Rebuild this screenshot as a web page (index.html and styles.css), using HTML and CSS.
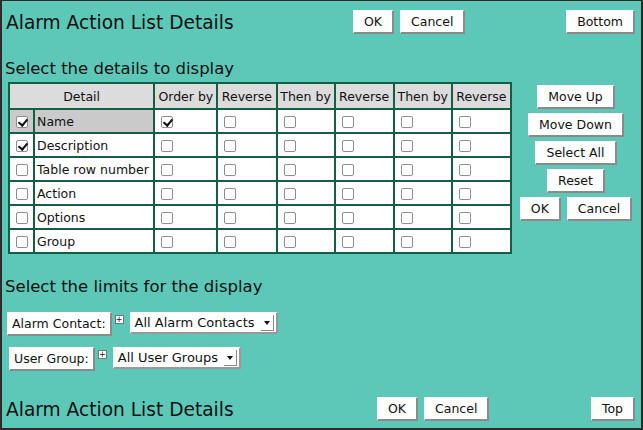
FILE: index.html
```html
<!DOCTYPE html>
<html lang="en">
<head>
    <meta charset="UTF-8">
    <title>Alarm Action List Details</title>
    <link rel="stylesheet" href="styles.css">
</head>
<body>
    <div class="frame">
        <div class="topbar">
            <h1 class="titulo">Alarm Action List Details</h1>
            <div class="acoes">
                <button class="btn">OK</button>
                <button class="btn">Cancel</button>
            </div>
            <button class="btn salto">Bottom</button>
        </div>

        <h2 class="secao">Select the details to display</h2>
        <div class="detalhes">
            <table class="grade">
                <colgroup>
                    <col class="c-marca">
                    <col class="c-nome">
                    <col class="c-ordem">
                    <col class="c-rev">
                    <col class="c-then">
                    <col class="c-rev">
                    <col class="c-then">
                    <col class="c-rev">
                </colgroup>
                <thead>
                    <tr>
                        <th colspan="2">Detail</th>
                        <th>Order by</th>
                        <th>Reverse</th>
                        <th>Then by</th>
                        <th>Reverse</th>
                        <th>Then by</th>
                        <th>Reverse</th>
                    </tr>
                </thead>
                <tbody>
                    <tr class="selecionada">
                        <td class="marca"><input type="checkbox" checked></td>
                        <td class="nome">Name</td>
                        <td><input type="checkbox" checked></td>
                        <td><input type="checkbox"></td>
                        <td><input type="checkbox"></td>
                        <td><input type="checkbox"></td>
                        <td><input type="checkbox"></td>
                        <td><input type="checkbox"></td>
                    </tr>
                    <tr>
                        <td class="marca"><input type="checkbox" checked></td>
                        <td class="nome">Description</td>
                        <td><input type="checkbox"></td>
                        <td><input type="checkbox"></td>
                        <td><input type="checkbox"></td>
                        <td><input type="checkbox"></td>
                        <td><input type="checkbox"></td>
                        <td><input type="checkbox"></td>
                    </tr>
                    <tr>
                        <td class="marca"><input type="checkbox"></td>
                        <td class="nome">Table row number</td>
                        <td><input type="checkbox"></td>
                        <td><input type="checkbox"></td>
                        <td><input type="checkbox"></td>
                        <td><input type="checkbox"></td>
                        <td><input type="checkbox"></td>
                        <td><input type="checkbox"></td>
                    </tr>
                    <tr>
                        <td class="marca"><input type="checkbox"></td>
                        <td class="nome">Action</td>
                        <td><input type="checkbox"></td>
                        <td><input type="checkbox"></td>
                        <td><input type="checkbox"></td>
                        <td><input type="checkbox"></td>
                        <td><input type="checkbox"></td>
                        <td><input type="checkbox"></td>
                    </tr>
                    <tr>
                        <td class="marca"><input type="checkbox"></td>
                        <td class="nome">Options</td>
                        <td><input type="checkbox"></td>
                        <td><input type="checkbox"></td>
                        <td><input type="checkbox"></td>
                        <td><input type="checkbox"></td>
                        <td><input type="checkbox"></td>
                        <td><input type="checkbox"></td>
                    </tr>
                    <tr>
                        <td class="marca"><input type="checkbox"></td>
                        <td class="nome">Group</td>
                        <td><input type="checkbox"></td>
                        <td><input type="checkbox"></td>
                        <td><input type="checkbox"></td>
                        <td><input type="checkbox"></td>
                        <td><input type="checkbox"></td>
                        <td><input type="checkbox"></td>
                    </tr>
                </tbody>
            </table>

            <div class="lateral">
                <button class="btn">Move Up</button>
                <button class="btn">Move Down</button>
                <button class="btn">Select All</button>
                <button class="btn">Reset</button>
                <div class="par">
                    <button class="btn">OK</button>
                    <button class="btn">Cancel</button>
                </div>
            </div>
        </div>

        <h2 class="secao limites">Select the limits for the display</h2>
        <div class="filtro f1">
            <button class="btn rotulo">Alarm Contact:</button>
            <span class="mais">+</span>
            <span class="lista">All Alarm Contacts <span class="seta"></span></span>
        </div>
        <div class="filtro f2">
            <button class="btn rotulo">User Group:</button>
            <span class="mais">+</span>
            <span class="lista">All User Groups <span class="seta"></span></span>
        </div>

        <div class="topbar rodape">
            <h1 class="titulo">Alarm Action List Details</h1>
            <div class="acoes">
                <button class="btn">OK</button>
                <button class="btn">Cancel</button>
            </div>
            <button class="btn salto">Top</button>
        </div>
    </div>
</body>
</html>
```

FILE: styles.css
```css
body {
    margin: 0;
    font-family: "DejaVu Sans", Verdana, sans-serif;
    color: #111;
}
.frame {
    width: 643px;
    height: 430px;
    box-sizing: border-box;
    background-color: #5dc8b7;
    border: 1px solid #2b2b2b;
    border-left-width: 2px;
    border-right-width: 2px;
    border-bottom-width: 2px;
    position: relative;
}
.topbar {
    display: flex;
    align-items: center;
    height: 24px;
    margin-top: 9px;
    padding: 0 6px 0 4px;
}
.titulo {
    font-size: 18.6px;
    font-weight: normal;
    margin: 0;
    width: 347px;
}
.acoes {
    display: flex;
    gap: 6px;
}
.salto {
    margin-left: auto;
}
.btn {
    font-family: "DejaVu Sans", Verdana, sans-serif;
    font-size: 12.5px;
    color: #111;
    background-color: #fff;
    height: 24px;
    padding: 0 10px;
    border: 1px solid #fff;
    border-right: 2px solid #8a8a8a;
    border-bottom: 2px solid #8a8a8a;
    border-radius: 0;
}
.secao {
    font-size: 16.5px;
    font-weight: normal;
    margin: 25px 0 0 3px;
    line-height: 20px;
}
.detalhes {
    display: flex;
    margin: 3px 0 0 6px;
}
.grade {
    background-color: #135f42;
    border-spacing: 2px;
    font-size: 12.5px;
    table-layout: fixed;
    width: 504px;
}
.c-marca { width: 23px; }
.c-nome { width: 118px; }
.c-ordem { width: 61px; }
.c-rev { width: 57px; }
.c-then { width: 56px; }
.grade th {
    background-color: #dcdcdc;
    font-weight: normal;
    height: 24px;
    padding: 0;
    white-space: nowrap;
}
.grade td {
    background-color: #fff;
    height: 22px;
    padding: 0 0 0 6px;
    text-align: left;
}
.grade td.nome {
    padding: 0 2px;
    white-space: nowrap;
}
.grade tr.selecionada td.marca, .grade tr.selecionada td.nome {
    background-color: #cacaca;
}
.grade input {
    appearance: none;
    margin: 0;
    width: 12px;
    height: 12px;
    border: 1px solid #8e8e8e;
    border-radius: 2px;
    background: #fff;
    vertical-align: middle;
    position: relative;
}
.grade input:checked::after {
    content: "";
    position: absolute;
    left: 3px;
    top: 0;
    width: 4px;
    height: 7px;
    border-right: 2px solid #111;
    border-bottom: 2px solid #111;
    transform: rotate(40deg);
}
.lateral {
    display: flex;
    flex-direction: column;
    align-items: center;
    gap: 4px;
    margin: 3px 0 0 4px;
    width: 120px;
}
.par {
    display: flex;
    gap: 6px;
}
.limites {
    margin-top: 23px;
}
.filtro {
    display: flex;
    align-items: flex-start;
    margin-left: 5px;
}
.rotulo {
    padding: 0 4px;
}
.f1 {
    margin-top: 15px;
}
.f2 {
    margin-top: 11px;
    margin-left: 7px;
}
.mais {
    width: 7px;
    height: 7px;
    border: 1px solid #777;
    background: #fff;
    font-size: 8px;
    line-height: 7px;
    text-align: center;
    margin: 3px 6px 0 3px;
}
.lista {
    display: flex;
    align-items: center;
    justify-content: space-between;
    gap: 6px;
    height: 22px;
    background: #fff;
    border: 1px solid #fff;
    border-right: 2px solid #999;
    border-bottom: 2px solid #999;
    font-size: 13px;
    padding: 0 2px 0 4px;
    box-sizing: border-box;
}
.seta {
    width: 12px;
    height: 15px;
    border-right: 1px solid #888;
    border-bottom: 1px solid #888;
    position: relative;
}
.seta::after {
    content: "";
    position: absolute;
    left: 3px;
    top: 6px;
    border: 3px solid transparent;
    border-top: 4px solid #111;
}
.rodape {
    position: absolute;
    left: 0;
    right: 0;
    bottom: 7px;
    margin: 0;
}
.rodape .titulo {
    width: 371px;
}
```
